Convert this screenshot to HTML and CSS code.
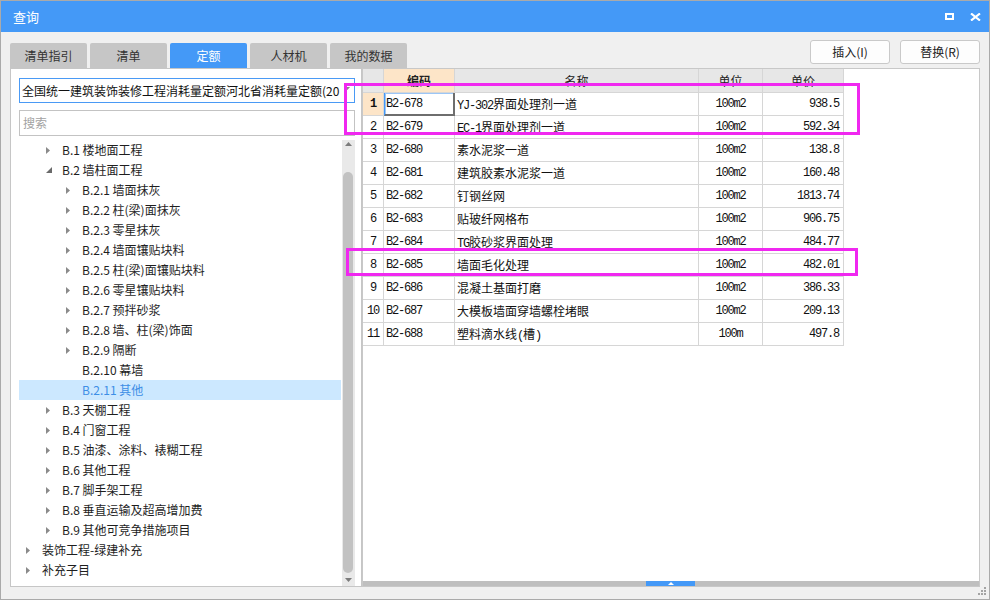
FILE: index.html
```html
<!DOCTYPE html>
<html lang="zh-CN">
<head>
<meta charset="utf-8">
<title>查询</title>
<link rel="stylesheet" href="styles.css">
</head>
<body>
<div class="win">
  <div class="titlebar">
    <div class="title">查询</div>
    <div class="tb-btns">
      <svg class="ic-max" width="9" height="7" viewBox="0 0 9 7"><rect x="1" y="1" width="7" height="5" fill="none" stroke="#fff" stroke-width="2"/></svg>
      <svg class="ic-close" width="11" height="8" viewBox="0 0 11 8"><path d="M1 0.5 L10 7.5 M10 0.5 L1 7.5" stroke="#fff" stroke-width="2.2" fill="none"/></svg>
    </div>
  </div>
  <div class="main">
    <div class="toprow">
      <div class="tabs">
        <div class="tab">清单指引</div>
        <div class="tab">清单</div>
        <div class="tab active">定额</div>
        <div class="tab">人材机</div>
        <div class="tab">我的数据</div>
      </div>
      <div class="actions">
        <div class="btn">插入(I)</div>
        <div class="btn">替换(R)</div>
      </div>
    </div>
    <div class="panels">
      <div class="left">
        <div class="combo">
          <div class="combo-text">全国统一建筑装饰装修工程消耗量定额河北省消耗量定额(20</div>
          <svg class="combo-arrow" width="5" height="3" viewBox="0 0 5 3"><path d="M0 0 L5 0 L2.5 3Z" fill="#8a8a8a"/></svg>
        </div>
        <div class="search">搜索</div>
        <div class="treewrap">
          <div class="tree">
            <div class="node l1"><span class="arr"><svg width="4" height="7" viewBox="0 0 4 7"><path d="M0 0 L4 3.5 L0 7Z"/></svg></span>B.1 楼地面工程</div>
            <div class="node l1"><span class="arr"><svg class="open" width="6" height="6" viewBox="0 0 6 6"><path d="M6 0 L6 6 L0 6Z"/></svg></span>B.2 墙柱面工程</div>
            <div class="node l2"><span class="arr"><svg width="4" height="7" viewBox="0 0 4 7"><path d="M0 0 L4 3.5 L0 7Z"/></svg></span>B.2.1 墙面抹灰</div>
            <div class="node l2"><span class="arr"><svg width="4" height="7" viewBox="0 0 4 7"><path d="M0 0 L4 3.5 L0 7Z"/></svg></span>B.2.2 柱(梁)面抹灰</div>
            <div class="node l2"><span class="arr"><svg width="4" height="7" viewBox="0 0 4 7"><path d="M0 0 L4 3.5 L0 7Z"/></svg></span>B.2.3 零星抹灰</div>
            <div class="node l2"><span class="arr"><svg width="4" height="7" viewBox="0 0 4 7"><path d="M0 0 L4 3.5 L0 7Z"/></svg></span>B.2.4 墙面镶贴块料</div>
            <div class="node l2"><span class="arr"><svg width="4" height="7" viewBox="0 0 4 7"><path d="M0 0 L4 3.5 L0 7Z"/></svg></span>B.2.5 柱(梁)面镶贴块料</div>
            <div class="node l2"><span class="arr"><svg width="4" height="7" viewBox="0 0 4 7"><path d="M0 0 L4 3.5 L0 7Z"/></svg></span>B.2.6 零星镶贴块料</div>
            <div class="node l2"><span class="arr"><svg width="4" height="7" viewBox="0 0 4 7"><path d="M0 0 L4 3.5 L0 7Z"/></svg></span>B.2.7 预拌砂浆</div>
            <div class="node l2"><span class="arr"><svg width="4" height="7" viewBox="0 0 4 7"><path d="M0 0 L4 3.5 L0 7Z"/></svg></span>B.2.8 墙、柱(梁)饰面</div>
            <div class="node l2"><span class="arr"><svg width="4" height="7" viewBox="0 0 4 7"><path d="M0 0 L4 3.5 L0 7Z"/></svg></span>B.2.9 隔断</div>
            <div class="node l2"><span class="arr"></span>B.2.10 幕墙</div>
            <div class="node l2 sel"><span class="arr"></span>B.2.11 其他</div>
            <div class="node l1"><span class="arr"><svg width="4" height="7" viewBox="0 0 4 7"><path d="M0 0 L4 3.5 L0 7Z"/></svg></span>B.3 天棚工程</div>
            <div class="node l1"><span class="arr"><svg width="4" height="7" viewBox="0 0 4 7"><path d="M0 0 L4 3.5 L0 7Z"/></svg></span>B.4 门窗工程</div>
            <div class="node l1"><span class="arr"><svg width="4" height="7" viewBox="0 0 4 7"><path d="M0 0 L4 3.5 L0 7Z"/></svg></span>B.5 油漆、涂料、裱糊工程</div>
            <div class="node l1"><span class="arr"><svg width="4" height="7" viewBox="0 0 4 7"><path d="M0 0 L4 3.5 L0 7Z"/></svg></span>B.6 其他工程</div>
            <div class="node l1"><span class="arr"><svg width="4" height="7" viewBox="0 0 4 7"><path d="M0 0 L4 3.5 L0 7Z"/></svg></span>B.7 脚手架工程</div>
            <div class="node l1"><span class="arr"><svg width="4" height="7" viewBox="0 0 4 7"><path d="M0 0 L4 3.5 L0 7Z"/></svg></span>B.8 垂直运输及超高增加费</div>
            <div class="node l1"><span class="arr"><svg width="4" height="7" viewBox="0 0 4 7"><path d="M0 0 L4 3.5 L0 7Z"/></svg></span>B.9 其他可竞争措施项目</div>
            <div class="node l0"><span class="arr"><svg width="4" height="7" viewBox="0 0 4 7"><path d="M0 0 L4 3.5 L0 7Z"/></svg></span>装饰工程-绿建补充</div>
            <div class="node l0"><span class="arr"><svg width="4" height="7" viewBox="0 0 4 7"><path d="M0 0 L4 3.5 L0 7Z"/></svg></span>补充子目</div>
          </div>
          <div class="vscroll">
            <div class="sb-up"><svg width="7" height="4" viewBox="0 0 7 4"><path d="M3.5 0 L7 4 L0 4Z" fill="#7c7c7c"/></svg></div>
            <div class="sb-thumb"></div>
            <div class="sb-down"><svg width="7" height="4" viewBox="0 0 7 4"><path d="M0 0 L7 0 L3.5 4Z" fill="#7c7c7c"/></svg></div>
          </div>
        </div>
      </div>
      <div class="right">
        <div class="grid">
          <div class="tr th">
            <div class="td"></div>
            <div class="td hl"><b>编码</b></div>
            <div class="td c">名称</div>
            <div class="td c">单位</div>
            <div class="td c">单价</div>
          </div>
          <div class="tr">
            <div class="td idx cur">1</div>
            <div class="td m focus">B2-678</div>
            <div class="td"><span class="m">YJ-302</span>界面处理剂一道</div>
            <div class="td m c">100m2</div>
            <div class="td m r">938.5</div>
          </div>
          <div class="tr">
            <div class="td idx">2</div>
            <div class="td m">B2-679</div>
            <div class="td"><span class="m">EC-1</span>界面处理剂一道</div>
            <div class="td m c">100m2</div>
            <div class="td m r">592.34</div>
          </div>
          <div class="tr">
            <div class="td idx">3</div>
            <div class="td m">B2-680</div>
            <div class="td">素水泥浆一道</div>
            <div class="td m c">100m2</div>
            <div class="td m r">138.8</div>
          </div>
          <div class="tr">
            <div class="td idx">4</div>
            <div class="td m">B2-681</div>
            <div class="td">建筑胶素水泥浆一道</div>
            <div class="td m c">100m2</div>
            <div class="td m r">160.48</div>
          </div>
          <div class="tr">
            <div class="td idx">5</div>
            <div class="td m">B2-682</div>
            <div class="td">钉钢丝网</div>
            <div class="td m c">100m2</div>
            <div class="td m r">1813.74</div>
          </div>
          <div class="tr">
            <div class="td idx">6</div>
            <div class="td m">B2-683</div>
            <div class="td">贴玻纤网格布</div>
            <div class="td m c">100m2</div>
            <div class="td m r">906.75</div>
          </div>
          <div class="tr">
            <div class="td idx">7</div>
            <div class="td m">B2-684</div>
            <div class="td"><span class="m">TG</span>胶砂浆界面处理</div>
            <div class="td m c">100m2</div>
            <div class="td m r">484.77</div>
          </div>
          <div class="tr">
            <div class="td idx">8</div>
            <div class="td m">B2-685</div>
            <div class="td">墙面毛化处理</div>
            <div class="td m c">100m2</div>
            <div class="td m r">482.01</div>
          </div>
          <div class="tr">
            <div class="td idx">9</div>
            <div class="td m">B2-686</div>
            <div class="td">混凝土基面打磨</div>
            <div class="td m c">100m2</div>
            <div class="td m r">386.33</div>
          </div>
          <div class="tr">
            <div class="td idx">10</div>
            <div class="td m">B2-687</div>
            <div class="td">大模板墙面穿墙螺栓堵眼</div>
            <div class="td m c">100m2</div>
            <div class="td m r">209.13</div>
          </div>
          <div class="tr">
            <div class="td idx">11</div>
            <div class="td m">B2-688</div>
            <div class="td">塑料滴水线<span class="m">(</span>槽<span class="m">)</span></div>
            <div class="td m c">100m</div>
            <div class="td m r">497.8</div>
          </div>
        </div>
        <div class="hscroll">
          <div class="hs-thumb"><svg width="6" height="3" viewBox="0 0 6 3"><path d="M3 0 L6 3 L0 3Z" fill="#fff"/></svg></div>
        </div>
      </div>
    </div>
  </div>
  <div class="mark mark1"></div>
  <div class="mark mark2"></div>
  <svg class="grip" width="9" height="9" viewBox="0 0 9 9"><g fill="#a3a3a3"><rect x="6" y="0" width="2" height="2"/><rect x="3" y="3" width="2" height="2"/><rect x="6" y="3" width="2" height="2"/><rect x="0" y="6" width="2" height="2"/><rect x="3" y="6" width="2" height="2"/><rect x="6" y="6" width="2" height="2"/></g></svg>
</div>
</body>
</html>
```

FILE: styles.css
```css
* { box-sizing: border-box; margin: 0; padding: 0; }
body {
  margin: 0;
  font-family: "Noto Sans CJK SC", "Noto Sans", sans-serif;
  font-size: 12px;
  color: #1e1e1e;
  background: #ffffff;
}
.win {
  position: relative;
  width: 990px;
  height: 600px;
  border: 1px solid #aaaaaa;
  background: #f0f0f0;
  display: flex;
  flex-direction: column;
}
.titlebar {
  flex: none;
  height: 31px;
  background: #4499f7;
  color: #fff;
  display: flex;
  align-items: center;
  padding: 0 8px 0 12px;
}
.title { flex: 1; font-size: 13px; line-height: 31px; }
.tb-btns { display: flex; align-items: center; gap: 16px; }
.tb-btns svg { display: block; }

.main {
  flex: 1;
  display: flex;
  flex-direction: column;
  padding: 8px 9px 12px 9px;
  min-height: 0;
}
.toprow { flex: none; height: 28px; display: flex; }
.tabs { display: flex; gap: 3px; align-self: flex-end; }
.tab {
  width: 77px;
  height: 25px;
  line-height: 25px;
  text-align: center;
  background: #c6c6c6;
  color: #333;
  border-radius: 2px 2px 0 0;
}
.tab.active { background: #4499f7; color: #fff; }
.actions { margin-left: auto; display: flex; gap: 10px; align-self: flex-start; }
.btn {
  width: 80px;
  height: 24px;
  line-height: 22px;
  text-align: center;
  border: 1px solid #c9c9c9;
  border-radius: 3px;
  background: #fdfdfd;
  color: #222;
}

.panels { flex: 1; display: flex; min-height: 0; }
.left {
  width: 352px;
  flex: none;
  background: #fff;
  border: 1px solid #c6c6c6;
  padding: 9px 6px 0 8px;
  display: flex;
  flex-direction: column;
}
.combo {
  flex: none;
  height: 25px;
  border: 1px solid #4a9af5;
  display: flex;
  align-items: center;
  padding: 0 4px 0 2px;
}
.combo-text {
  flex: 1;
  white-space: nowrap;
  font-size: 12px;
  color: #111;
  line-height: 23px;
}
.combo-arrow { flex: none; margin-left: 1px; margin-top: -4px; }
.search {
  flex: none;
  margin-top: 7px;
  height: 26px;
  line-height: 24px;
  border: 1px solid #c3c3c3;
  padding-left: 3px;
  color: #a2a2a2;
}
.treewrap { flex: 1; margin-top: 4px; display: flex; gap: 1px; min-height: 0; }
.tree { flex: 1; }
.node {
  height: 20px;
  display: flex;
  align-items: center;
  white-space: nowrap;
  color: #1e1e1e;
  line-height: 20px;
}
.node.l1 { padding-left: 20px; }
.node.l2 { padding-left: 40px; }
.node.sel { background: #cce8ff; color: #3d8ee6; }
.arr { flex: none; width: 23px; height: 20px; display: flex; align-items: center; padding-left: 7px; }
.arr svg { display: block; fill: #8a8a8a; }
.arr svg.open { fill: #6a6a6a; }

.vscroll {
  flex: none;
  width: 13px;
  background: #e9e9e9;
  display: flex;
  flex-direction: column;
}
.sb-up { flex: none; height: 32px; display: flex; justify-content: center; align-items: flex-start; padding-top: 2px; }
.sb-thumb { flex: 1; margin: 0 2px 0 1px; background: #c2c2c2; border-radius: 5px; }
.sb-down { flex: none; height: 13px; display: flex; justify-content: center; align-items: center; }
.sb-up svg, .sb-down svg { display: block; }

.right {
  flex: 1;
  background: #fff;
  border: 1px solid #c8c8c8;
  display: flex;
  flex-direction: column;
  min-width: 0;
}
.grid { flex: 1; }
.tr {
  display: grid;
  grid-template-columns: 21px 71px 244px 64px 81px;
  height: 23px;
}
.tr.th { height: 24px; background: #fff; }
.td {
  border-right: 1px solid #d6d6d6;
  border-bottom: 1px solid #d6d6d6;
  padding: 0 2px;
  line-height: 22px;
  white-space: nowrap;
  overflow: hidden;
  font-family: "Noto Sans CJK SC", sans-serif;
  font-size: 12px;
  color: #111;
}
.th .td { background: #e7e7e7; line-height: 23px; text-align: center; color: #222; }
.th .td.hl { background: #fde5c8; }
.th .td b { font-weight: 700; }
.m {
  font-family: "Liberation Mono", monospace;
  font-size: 12px;
  letter-spacing: -1.2px;
}
.td.c { text-align: center; }
.td.r { text-align: right; padding-right: 4px; }
.td.idx {
  text-align: center;
  padding: 0;
  font-family: "Liberation Mono", monospace;
  font-size: 12px;
  letter-spacing: -1.2px;
}
.td.idx.cur { background: #fde5c8; font-weight: 700; }
.td.focus {
  border-right-color: #6e6e6e;
  border-bottom-color: #6e6e6e;
  box-shadow: inset -1px -1px 0 #6e6e6e, inset 1px 1px 0 #9cc6f6;
  border-left: 1px solid #4499f7;
  padding-left: 1px;
}
.hscroll {
  flex: none;
  height: 5px;
  background: #bfbfbf;
  display: flex;
}
.hs-thumb {
  margin-left: 283px;
  width: 49px;
  height: 5px;
  background: #4499f7;
  display: flex;
  justify-content: center;
  align-items: flex-end;
  padding-bottom: 1px;
}
.hs-thumb svg { display: block; }

.mark {
  position: absolute;
  border: 3px solid #f028f0;
  pointer-events: none;
}
.mark1 { left: 343px; top: 82px; width: 516px; height: 52px; }
.mark2 { left: 345px; top: 247px; width: 512px; height: 28px; }
.grip { position: absolute; right: 2px; bottom: 3px; display: block; }
```
